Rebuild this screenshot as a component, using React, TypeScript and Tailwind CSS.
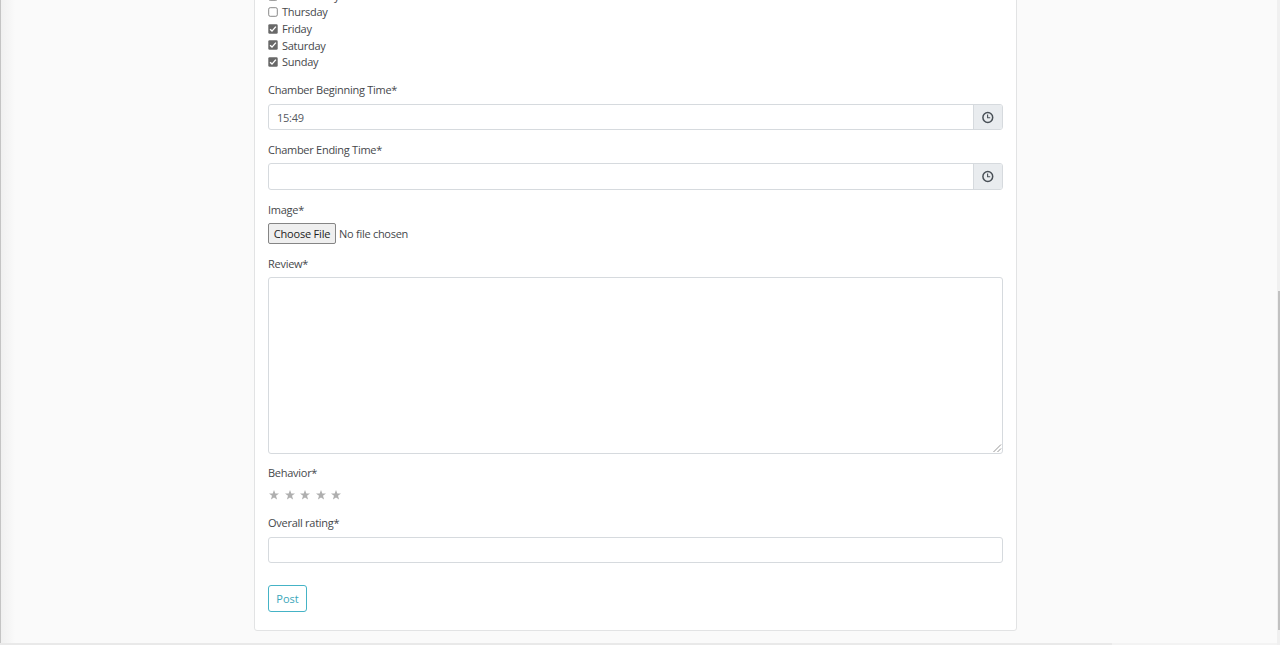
import type { ReactNode } from 'react'

const DAYS = [
  { name: 'Wednesday', checked: false },
  { name: 'Thursday', checked: false },
  { name: 'Friday', checked: true },
  { name: 'Saturday', checked: true },
  { name: 'Sunday', checked: true },
]

function Label({ children, low = false }: { children: ReactNode; low?: boolean }) {
  return (
    <div className={`h-[22px] whitespace-nowrap ${low ? 'leading-[18px]' : 'leading-[16px]'}`}>
      {children}
    </div>
  )
}

function DayOption({ name, checked }: { name: string; checked: boolean }) {
  return (
    <label className="flex h-[16.6px] items-center gap-[4px]">
      <svg width="10" height="10" viewBox="0 0 10 10" className="flex-shrink-0">
        {checked ? (
          <>
            <rect x="0.3" y="0.3" width="9.4" height="9.4" rx="1.3" fill="#686868" />
            <path d="M2.1 5.3 4 7.1 7.9 2.6" fill="none" stroke="#fff" strokeWidth="1.4" />
          </>
        ) : (
          <rect x="0.7" y="0.7" width="8.6" height="8.6" rx="1.5" fill="#fff" stroke="#7c7c7c" strokeWidth="0.9" />
        )}
      </svg>
      <span className="pt-[0.8px]">{name}</span>
    </label>
  )
}

function TimeInput({ value }: { value: string }) {
  return (
    <div className="flex h-full overflow-hidden rounded-[3px] border border-[#d6dade] bg-white">
      <div className="flex-1 px-[8px] leading-[25px] text-[#55595f]">{value}</div>
      <div className="flex w-[29px] items-center justify-center border-l border-[#d6dade] bg-[#e9ecef]">
        <svg width="13" height="13" viewBox="0 0 13 13" fill="none" stroke="#495057">
          <circle cx="5.8" cy="6.5" r="4.9" strokeWidth="1.5" />
          <path d="M5.6 3.4v3.3h2.6" strokeWidth="1.1" />
        </svg>
      </div>
    </div>
  )
}

export default function App() {
  return (
    <div className="flex h-[645px] w-full overflow-hidden bg-[#fafafa] font-['Open_Sans','Noto_Sans',sans-serif] text-[11px] tracking-[-0.27px] text-[#46484b]">
      <div className="flex flex-1 flex-col">
        <div className="flex h-[643px]">
          {/* Left edge shadow */}
          <div className="w-px bg-[#c4c4c4]" />
          <div className="w-[14px] bg-linear-to-r from-[#f0f0f0] to-[#fafafa]" />

          <div className="-mt-[13px] ml-[239px] h-[644px] w-[763px] rounded-[3px] border border-[#e2e3e4] bg-white px-[13px]">
            {/* Chamber days */}
            <div className="-mt-[0.7px] mb-[11.7px] h-[83px]">
              {DAYS.map((day) => (
                <DayOption key={day.name} name={day.name} checked={day.checked} />
              ))}
            </div>

            <div className="mb-[11px]">
              <Label>Chamber Beginning Time*</Label>
              <div className="h-[26px]">
                <TimeInput value="15:49" />
              </div>
            </div>

            <div className="mb-[11px]">
              <Label low>Chamber Ending Time*</Label>
              <div className="h-[27px]">
                <TimeInput value="" />
              </div>
            </div>

            <div className="mb-[11px]">
              <Label low>Image*</Label>
              <div className="flex h-[21px] items-center gap-[3px]">
                <button className="h-[21px] w-[68px] whitespace-nowrap rounded-[2px] border border-[#858585] bg-[#efefef] leading-[19px] tracking-[-0.2px] text-[#1c1c1c]">
                  Choose File
                </button>
                <span className="whitespace-nowrap pt-px">No file chosen</span>
              </div>
            </div>

            <div className="mb-[11px]">
              <Label low>Review*</Label>
              <div className="flex h-[177px] items-end justify-end rounded-[3px] border border-[#d6dade] bg-white">
                <svg width="9" height="9" viewBox="0 0 9 9" stroke="#8a8a8a" strokeWidth="0.9">
                  <path d="M0.5 8 8 0.5M4.5 8 8 4.5" />
                </svg>
              </div>
            </div>

            <div className="mb-[12px]">
              <Label>Behavior*</Label>
              <div className="flex h-[16px] items-center gap-[5.5px] pl-[1px]">
                {[1, 2, 3, 4, 5].map((n) => (
                  <svg key={n} width="10" height="10" viewBox="0 0 10 10" fill="#afafaf">
                    <path d="M5 0 6.3 3.5H10L7 5.8 8.1 9.6 5 7.4 1.9 9.6 3 5.8 0 3.5H3.7Z" />
                  </svg>
                ))}
              </div>
            </div>

            <div className="mb-[22px]">
              <Label>Overall rating*</Label>
              <div className="h-[26px] rounded-[3px] border border-[#d6dade] bg-white" />
            </div>

            <button className="h-[27px] w-[39px] rounded-[3px] border border-[#45b3c6] bg-white pt-px tracking-normal text-[#3ba6ba]">
              Post
            </button>
          </div>
        </div>

        {/* Horizontal scrollbar */}
        <div className="flex h-[2px] bg-[#f3f3f3]">
          <div className="w-[1112px] bg-[#e9e9e9]" />
        </div>
      </div>

      {/* Vertical scrollbar */}
      <div className="h-[645px] w-[3px] bg-[#f0f0f0] pl-px pt-[291px]">
        <div className="h-[339px] bg-[#c1c1c1]" />
      </div>
    </div>
  )
}
